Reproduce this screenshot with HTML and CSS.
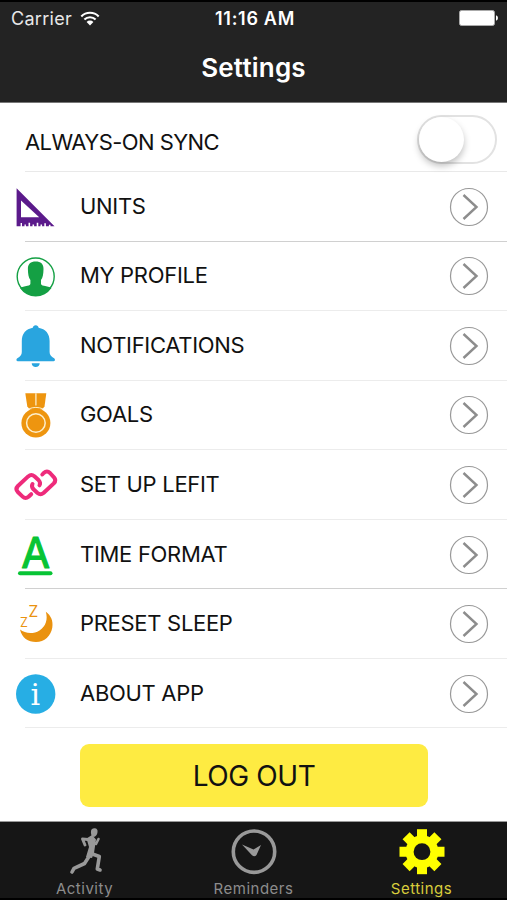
FILE: index.html
```
<!DOCTYPE html>
<html lang="en">
  <head>
    <meta charset="utf-8">
    <title>Settings</title>
    <link rel="stylesheet" href="styles.css">
  </head>
  <body>
    <header class="header">
      <div class="status">
        <div class="carrier">
          <span>Carrier</span>
          <svg class="wifi" viewBox="0 0 20 15" width="20" height="15">
            <path d="M1.3 5.4a12.3 12.3 0 0 1 17.4 0M4.4 8.6a8 8 0 0 1 11.2 0" fill="none" stroke="#fff" stroke-width="2.1"/>
            <path d="M6.6 11a4.8 4.8 0 0 1 6.8 0L10 14.5z" fill="#fff"/>
          </svg>
        </div>
        <span class="time">11:16 AM</span>
        <svg class="battery" viewBox="0 0 40 16" width="40" height="16">
          <rect x="0.5" y="0.5" width="35" height="15" rx="2" fill="#fff" stroke="#aaa"/>
          <path d="M37 5.2q2 .6 2 2.8t-2 2.8z" fill="#fff"/>
        </svg>
      </div>
      <h1>Settings</h1>
    </header>

    <main>
      <div class="sync">
        <span class="label">ALWAYS-ON SYNC</span>
        <span class="switch"><span class="knob"></span></span>
      </div>
      <ul class="menu">
        <li class="dark">
          <svg class="icon" viewBox="0 0 44 44">
            <path d="M2.600 3.200L40.500 41.300h-4v-1.600h-1.600v1.600h-3v-3h-1.600v3h-2.200v-1.800h-1.600v1.800h-2.200v-3.600h-1.600v3.600h-2.600v-1.800h-1.600v1.800h-2.400v-3.600h-1.600v3.600h-2.600v-1.800h-1.400v1.800H8v-3.400H6.600v3.400h-4zM7 15.600v16.700h18.200z" fill="#5b1a8b" fill-rule="evenodd"/>
          </svg>
          <span class="label">UNITS</span>
          <svg class="go" viewBox="0 0 40 40"><circle cx="20" cy="20" r="18.5"/><path d="M14.5 8L27.5 20L14.5 32"/></svg>
        </li>
        <li>
          <svg class="icon" viewBox="0 0 44 44">
            <circle cx="21.7" cy="22.500" r="18.5" fill="none" stroke="#14a044" stroke-width="1.4"/>
            <path d="M21.7 7.600c5 0 8 2.500 7.800 7.400-.1 5-.6 8.500-2.500 11v3.500c0 1.300.8 1.800 3 2.300 3 .6 5.500 1.200 7.500 2.200a19 19 0 0 1-31.600 0c2-1 4.500-1.600 7.500-2.200 2.200-.5 3-1 3-2.300V26c-1.900-2.500-2.400-6-2.500-11-.2-4.900 2.800-7.400 7.800-7.400z" fill="#14a044"/>
          </svg>
          <span class="label">MY PROFILE</span>
          <svg class="go" viewBox="0 0 40 40"><circle cx="20" cy="20" r="18.5"/><path d="M14.5 8L27.5 20L14.5 32"/></svg>
        </li>
        <li>
          <svg class="icon" viewBox="0 0 44 44">
            <path d="M21.700 1.300c1.600 0 2.700 1 2.900 2.400C31.500 5 35.600 9.500 35.600 17v11c0 3 1.500 4.500 4.500 6.200 1.300.9 1.200 3-.6 3H3.900c-1.800 0-1.900-2.100-.6-3C6.300 32.500 7.800 31 7.800 28V17c0-7.500 4.100-12 11-13.300.2-1.400 1.300-2.400 2.900-2.400zM17.700 39.300h8c0 2.300-1.700 3.700-4 3.700s-4-1.400-4-3.700z" fill="#29a5df"/>
          </svg>
          <span class="label">NOTIFICATIONS</span>
          <svg class="go" viewBox="0 0 40 40"><circle cx="20" cy="20" r="18.5"/><path d="M14.5 8L27.5 20L14.5 32"/></svg>
        </li>
        <li>
          <svg class="icon" viewBox="0 0 44 44">
            <path d="M11.300.2H32.300L30.500 13.500L28 16.500H16L13.300 13.500z" fill="#ee950f"/>
            <path d="M21.900.2v12.300" stroke="#fdeecb" stroke-width="1.300"/>
            <circle cx="21.900" cy="30" r="14.500" fill="#ee950f"/>
            <circle cx="21.900" cy="30" r="9.300" fill="none" stroke="#fdeecb" stroke-width="1.500"/>
            <path d="M14.500 16q7.400-3.200 14.800 0" fill="none" stroke="#fdeecb" stroke-width="1"/>
          </svg>
          <span class="label">GOALS</span>
          <svg class="go" viewBox="0 0 40 40"><circle cx="20" cy="20" r="18.5"/><path d="M14.5 8L27.5 20L14.5 32"/></svg>
        </li>
        <li>
          <svg class="icon" viewBox="0 0 44 44">
            <g fill="none" stroke="#ee2b7b" stroke-width="4" stroke-linecap="round" stroke-linejoin="round">
              <path d="M17.200 31.200L14.500 33.800Q11.500 36.300 8.600 33.600L3.800 29Q1 26 3.900 23L14.200 13.400Q17.300 10.700 20.400 13.200L24.500 17Q27 19.800 25.500 22.300"/>
              <path d="M28.300 11.500L29.700 10Q33 7 36 10L40 14.300Q42.700 17.400 39.800 20.400L29.500 30Q26.500 32.500 23.500 30L19.500 26.300Q17 23.500 18.500 21"/>
            </g>
          </svg>
          <span class="label">SET UP LEFIT</span>
          <svg class="go" viewBox="0 0 40 40"><circle cx="20" cy="20" r="18.5"/><path d="M14.5 8L27.5 20L14.5 32"/></svg>
        </li>
        <li class="dark">
          <svg class="icon" viewBox="0 0 44 44">
            <text class="letter-a" x="7.200" y="35.300" textLength="28.800" lengthAdjust="spacingAndGlyphs">A</text>
            <path d="M6 40.300H36.500" stroke="#08c435" stroke-width="4" stroke-linecap="round"/>
          </svg>
          <span class="label">TIME FORMAT</span>
          <svg class="go" viewBox="0 0 40 40"><circle cx="20" cy="20" r="18.5"/><path d="M14.5 8L27.5 20L14.5 32"/></svg>
        </li>
        <li>
          <svg class="icon" viewBox="0 0 44 44">
            <path d="M31.800 9.800C37 13.500 39.300 19 38.300 25.500C37 34 30.500 40 22 40C14 40 8 36 6 27.500C11 31.500 19 32.500 25.500 28.500C32 24.500 34 17 31.800 9.800z" fill="#ea920f"/>
            <text class="zed" x="14.600" y="15" font-size="15.500">Z</text>
            <text class="zed" x="6" y="25.200" font-size="12.500">Z</text>
          </svg>
          <span class="label">PRESET SLEEP</span>
          <svg class="go" viewBox="0 0 40 40"><circle cx="20" cy="20" r="18.5"/><path d="M14.5 8L27.5 20L14.5 32"/></svg>
        </li>
        <li>
          <svg class="icon" viewBox="0 0 44 44">
            <circle cx="21.700" cy="22" r="19.700" fill="#27aee4"/>
            <text class="info" x="21.400" y="33.300" text-anchor="middle">i</text>
          </svg>
          <span class="label">ABOUT APP</span>
          <svg class="go" viewBox="0 0 40 40"><circle cx="20" cy="20" r="18.5"/><path d="M14.5 8L27.5 20L14.5 32"/></svg>
        </li>
      </ul>
      <button class="logout">LOG OUT</button>
    </main>

    <nav class="tabs">
      <a class="tab">
        <svg viewBox="0 0 48 48" width="48" height="48">
          <g fill="none" stroke="#999" stroke-linecap="round" stroke-linejoin="round">
            <path d="M27 11.500L21.500 11L24 17" stroke-width="2.900"/>
            <path d="M31.500 13.500L35 16L37.500 11" stroke-width="2.600"/>
            <path d="M29 27L23.500 35.500L13 40.300L11 44" stroke-width="3.600"/>
            <path d="M30 25.500L38.300 28.500L36.300 41L39 42" stroke-width="3.600"/>
          </g>
          <path d="M25.500 10.500L31 7L35 11.500L33 25L31 30L25 29L28 19z" fill="#999"/>
          <path d="M30 3q.5-3 3.700-2.800Q37 .5 36.500 4.200T33 9Q29.300 8.500 30 3z" fill="#999"/>
        </svg>
        <span>Activity</span>
      </a>
      <a class="tab">
        <svg viewBox="0 0 48 48" width="48" height="48">
          <circle cx="24" cy="23.700" r="20.700" fill="none" stroke="#999" stroke-width="3.600"/>
          <path d="M12 16.500L23.500 21.500L31 17L26.500 27Q24.500 29.500 22 27.200z" fill="#999"/>
        </svg>
        <span>Reminders</span>
      </a>
      <a class="tab active">
        <svg viewBox="0 0 48 48" width="48" height="48">
          <g fill="#ff0" transform="translate(23 23.700)">
            <path d="M-5-22.500H5V22.500H-5z"/>
            <path d="M-5-22.500H5V22.500H-5z" transform="rotate(45)"/>
            <path d="M-5-22.500H5V22.500H-5z" transform="rotate(90)"/>
            <path d="M-5-22.500H5V22.500H-5z" transform="rotate(135)"/>
            <circle r="16.500"/>
            <circle r="8.400" fill="#161616"/>
          </g>
        </svg>
        <span>Settings</span>
      </a>
    </nav>
  </body>
</html>
```
FILE: styles.css
```
* {
  box-sizing: border-box;
}
body {
  margin: 0;
  width: 507px;
  height: 900px;
  display: flex;
  flex-direction: column;
  overflow: hidden;
  background: #fff;
  font-family: Inter, "Liberation Sans", sans-serif;
  color: #111;
}
.header {
  height: 103px;
  background: #232323;
  border-top: 2px solid #000;
  border-bottom: 1px solid #777;
  color: #fff;
}
.status {
  display: grid;
  grid-template-columns: 1fr auto 1fr;
  align-items: center;
  height: 32px;
  padding: 0 8px 0 11px;
}
.carrier {
  display: flex;
  align-items: center;
  gap: 8px;
  font-size: 18px;
  letter-spacing: 0.3px;
  color: #e8e8e8;
}
.time {
  font-size: 18px;
  font-weight: 600;
  letter-spacing: 0.7px;
}
.battery {
  justify-self: end;
}
h1 {
  margin: 17px 0 0;
  text-align: center;
  font-size: 26px;
  line-height: 34px;
  font-weight: 600;
  letter-spacing: 0.2px;
}
main {
  flex: 1;
}
.sync {
  display: flex;
  justify-content: space-between;
  height: 69px;
  margin-left: 25px;
  padding: 12px 10px 0 0;
  border-bottom: 1px solid #e9e9e9;
}
.label {
  font-size: 22px;
  line-height: 55px;
  letter-spacing: -0.3px;
  white-space: nowrap;
}
.sync .label {
  letter-spacing: -0.57px;
}
.switch {
  width: 80px;
  height: 49px;
  border: 2px solid #e2e2e2;
  border-radius: 25px;
}
.knob {
  display: block;
  width: 45px;
  height: 45px;
  border-radius: 50%;
  background: #fff;
  box-shadow: 0 4px 7px rgba(0, 0, 0, 0.25);
}
.menu {
  margin: 0;
  padding: 0;
  list-style: none;
}
.menu li {
  display: flex;
  align-items: center;
  height: 69.55px;
  padding: 0 18px 0 14px;
  background: linear-gradient(#ececec, #ececec) 25px 100% / 100% 1px no-repeat;
}
.menu .dark {
  background-image: linear-gradient(#d0d0d0, #d0d0d0);
}
.icon {
  width: 44px;
  height: 44px;
  margin-right: 22px;
  overflow: visible;
}
.menu .label {
  flex: 1;
  padding-bottom: 1px;
}
.go {
  width: 40px;
  height: 40px;
  fill: none;
  stroke: #8d8d8d;
}
.go circle {
  stroke-width: 1.2;
  stroke: #999;
}
.go path {
  stroke-width: 2.4;
}
.letter-a {
  font-size: 43px;
  fill: #08c435;
  stroke: #08c435;
  stroke-width: 1.2;
  stroke-linejoin: round;
}
.zed {
  fill: #ea920f;
}
.info {
  font-family: "DejaVu Serif", serif;
  font-size: 30px;
  fill: #fff;
}
.logout {
  display: block;
  width: 348px;
  height: 63px;
  margin: 16px 0 0 80px;
  padding: 0;
  border: 0;
  border-radius: 9px;
  background: #feeb42;
  color: #111;
  font-family: inherit;
  font-size: 28px;
  letter-spacing: -0.4px;
}
.tabs {
  display: flex;
  height: 79px;
  background: #161616;
  border-top: 1px solid #999;
  border-bottom: 2px solid #000;
}
.tab {
  flex: 1;
  display: flex;
  flex-direction: column;
  align-items: center;
  padding-top: 6px;
  font-size: 15px;
  line-height: 25px;
  letter-spacing: 0.5px;
  color: #8c8c8c;
}
.tab svg {
  flex: none;
}
.active {
  color: #d9cd3c;
}
.active span {
  margin-right: 2px;
}
```
